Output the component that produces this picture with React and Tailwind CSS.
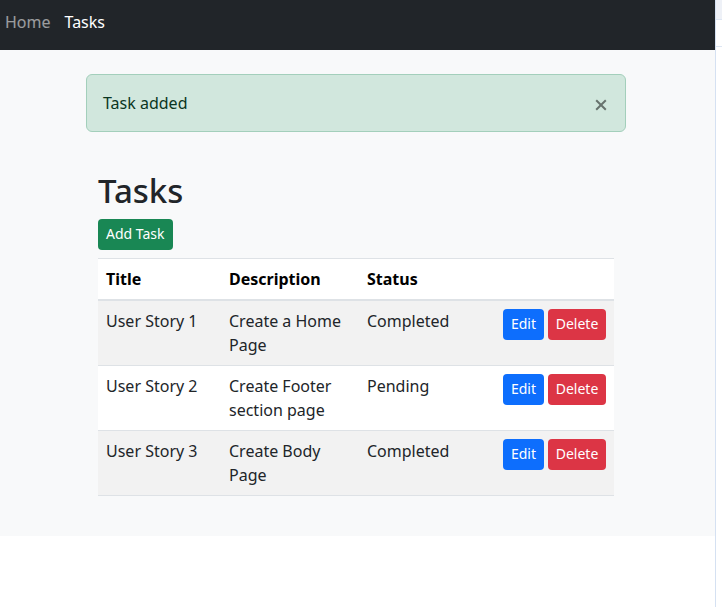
import React, { useState } from "react";

const initialTasks = [
  { id: 1, title: "User Story 1", description: "Create a Home Page", status: "Completed" },
  { id: 2, title: "User Story 2", description: "Create Footer section page", status: "Pending" },
  { id: 3, title: "User Story 3", description: "Create Body Page", status: "Completed" },
];

const Navbar = () => (
  <nav className="h-[50px] bg-[#212529] pl-[5px] pt-[10px] flex gap-[14px] text-base leading-6">
    <a className="text-white/55">Home</a>
    <a className="text-white">Tasks</a>
  </nav>
);

const Alert = ({ onClose }) => (
  <div className="relative rounded-md border border-[#a3cfbb] bg-[#d1e7dd] py-4 pl-4 pr-12 text-[#0a3622] leading-6">
    Task added
    <button
      onClick={onClose}
      className="absolute right-0 top-0 px-4 py-5 opacity-50"
      aria-label="Close"
    >
      <svg width="16" height="16" viewBox="0 0 16 16" className="mt-[2px] ml-[-1px]">
        <path d="M3.2 3.2l9.6 9.6M12.8 3.2l-9.6 9.6" stroke="#000" strokeWidth="2" />
      </svg>
    </button>
  </div>
);

const App = () => {
  const [tasks] = useState(initialTasks);
  const [showAlert, setShowAlert] = useState(true);

  return (
    <div className="flex min-h-[607px] bg-white text-[#212529]" style={{ fontFamily: '"Noto Sans", "Open Sans", sans-serif' }}>
      <div className="w-[715px]">
        <Navbar />
        <main className="bg-[#f8f9fa] pt-6 pb-6">
          <div className="ml-[86px] w-[540px] flex flex-col">
            {showAlert && <Alert onClose={() => setShowAlert(false)} />}
            <div className="mt-[39px] px-3">
              <h1 className="mb-2 text-[33px] font-medium leading-[1.2]">Tasks</h1>
              <button className="h-[31px] rounded bg-[#198754] px-2 text-sm text-white">Add Task</button>
              <table className="mt-2 mb-4 w-full table-fixed text-left leading-6">
                <colgroup>
                  <col className="w-[123px]" />
                  <col className="w-[138px]" />
                  <col className="w-[136px]" />
                  <col />
                </colgroup>
                <thead>
                  <tr className="border-t border-b-2 border-[#dee2e6] bg-white">
                    <th className="p-2 font-bold text-black">Title</th>
                    <th className="p-2 font-bold text-black">Description</th>
                    <th className="p-2 font-bold text-black">Status</th>
                    <th className="p-2"></th>
                  </tr>
                </thead>
                <tbody>
                  {tasks.map((task, i) => (
                    <tr
                      key={task.id}
                      className={`border-b border-[#dee2e6] align-top ${i % 2 === 0 ? "bg-[#f2f2f2]" : "bg-white"}`}
                    >
                      <td className="p-2">{task.title}</td>
                      <td className="p-2">{task.description}</td>
                      <td className="p-2">{task.status}</td>
                      <td className="p-2">
                        <div className="flex gap-1">
                          <button className="h-[31px] w-[41px] rounded bg-[#0d6efd] text-sm text-white">Edit</button>
                          <button className="h-[31px] w-[58px] rounded bg-[#dc3545] text-sm text-white">Delete</button>
                        </div>
                      </td>
                    </tr>
                  ))}
                </tbody>
              </table>
            </div>
          </div>
        </main>
      </div>
      <div className="flex-1 border-l border-[#d5e1f2]">
        <div className="h-5 border-b border-[#dde6f3] bg-[#eef1f7]"></div>
        <div className="h-[27px] border-b border-[#dde6f3]"></div>
      </div>
    </div>
  );
};

export default App;
